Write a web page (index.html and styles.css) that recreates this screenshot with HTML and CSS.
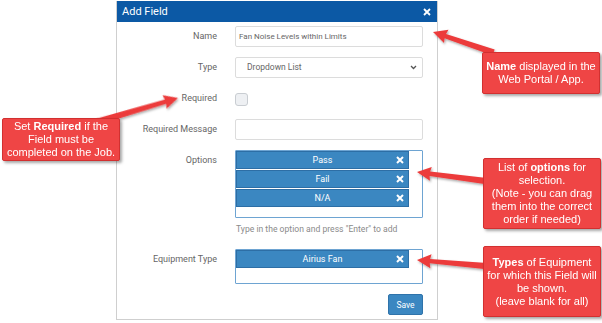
FILE: index.html
```html
<!DOCTYPE html>
<html lang="en">

<head>
    <meta charset="UTF-8" />
    <meta name="viewport" content="width=device-width, initial-scale=1.0" />
    <title>Add Field</title>
    <link rel="stylesheet" href="styles.css">
</head>

<body>
    <div class="page">
        <div class="dialog">
            <div class="dialog-header">
                <span>Add Field</span>
                <svg class="close" width="8" height="8" viewBox="0 0 8 8">
                    <path d="M1 1L7 7M7 1L1 7" stroke="#fff" stroke-width="1.8" />
                </svg>
            </div>
            <div class="dialog-body">
                <div class="row">
                    <div class="label">Name</div>
                    <div class="control">
                        <div class="input">Fan Noise Levels within Limits</div>
                    </div>
                </div>
                <div class="row">
                    <div class="label">Type</div>
                    <div class="control">
                        <div class="input select">
                            <span>Dropdown List</span>
                            <svg width="7" height="5" viewBox="0 0 7 5">
                                <path d="M1 1L3.5 3.5L6 1" fill="none" stroke="#555" stroke-width="1.3" />
                            </svg>
                        </div>
                    </div>
                </div>
                <div class="row">
                    <div class="label">Required</div>
                    <div class="control">
                        <div class="checkbox"></div>
                    </div>
                </div>
                <div class="row">
                    <div class="label">Required Message</div>
                    <div class="control">
                        <div class="input"></div>
                    </div>
                </div>
                <div class="row">
                    <div class="label">Options</div>
                    <div class="control">
                        <div class="tag-box options">
                            <div class="tag">Pass<svg class="tag-x" width="8" height="8" viewBox="0 0 8 8"><path d="M1 1L7 7M7 1L1 7" stroke="#fff" stroke-width="2" /></svg></div>
                            <div class="tag">Fail<svg class="tag-x" width="8" height="8" viewBox="0 0 8 8"><path d="M1 1L7 7M7 1L1 7" stroke="#fff" stroke-width="2" /></svg></div>
                            <div class="tag">N/A<svg class="tag-x" width="8" height="8" viewBox="0 0 8 8"><path d="M1 1L7 7M7 1L1 7" stroke="#fff" stroke-width="2" /></svg></div>
                        </div>
                        <div class="hint">Type in the option and press "Enter" to add</div>
                    </div>
                </div>
                <div class="row">
                    <div class="label">Equipment Type</div>
                    <div class="control">
                        <div class="tag-box equipment">
                            <div class="tag">Airius Fan<svg class="tag-x" width="8" height="8" viewBox="0 0 8 8"><path d="M1 1L7 7M7 1L1 7" stroke="#fff" stroke-width="2" /></svg></div>
                        </div>
                    </div>
                </div>
                <div class="row">
                    <div class="label"></div>
                    <div class="control actions">
                        <button class="save-btn">Save</button>
                    </div>
                </div>
            </div>
        </div>

        <!-- annotation arrows -->
        <svg class="arrows" width="602" height="323" viewBox="0 0 602 323">
            <defs>
                <filter id="shadow" x="-20%" y="-50%" width="140%" height="200%">
                    <feDropShadow dx="1" dy="1.5" stdDeviation="1" flood-color="#000" flood-opacity="0.35" />
                </filter>
            </defs>
            <g fill="#ec3b3b" filter="url(#shadow)">
                <polygon transform="translate(433 32) rotate(18.7)" points="0,0 14,-7 13,-2.2 64,-3.2 64,3.2 13,2.2 14,7" />
                <polygon transform="translate(178 98) rotate(163.6)" points="0,0 14,-7 13,-2.2 84,-3.2 84,3.2 13,2.2 14,7" />
                <polygon transform="translate(417 172) rotate(7.5)" points="0,0 14,-7 13,-2.2 70,-3.2 70,3.2 13,2.2 14,7" />
                <polygon transform="translate(417 260) rotate(5)" points="0,0 14,-7 13,-2.2 70,-3.2 70,3.2 13,2.2 14,7" />
            </g>
        </svg>

        <div class="callout callout-name"><span><b>Name</b> displayed in the<br>Web Portal / App.</span></div>
        <div class="callout callout-required"><span>Set <b>Required</b> if the<br>Field must be<br>completed on the Job.</span></div>
        <div class="callout callout-options"><span>List of <b>options</b> for<br>selection.<br>(Note - you can drag<br>them into the correct<br>order if needed)</span></div>
        <div class="callout callout-types"><span><b>Types</b> of Equipment<br>for which this Field will<br>be shown.<br>(leave blank for all)</span></div>
    </div>
</body>

</html>
```

FILE: styles.css
```css
/* page */

body {
    margin: 0;
    background-color: #fff;
    font-family: Roboto, "Liberation Sans", sans-serif;
}

.page {
    position: relative;
    width: 602px;
    height: 323px;
    overflow: hidden;
    padding: 1px 0 0 116px;
    box-sizing: border-box;
}

/* dialog */

.dialog {
    width: 322px;
    box-sizing: border-box;
    border: 1px solid #cfcfcf;
    border-top: none;
    background-color: #fff;
}

.dialog-header {
    height: 21px;
    background-color: #0c59a5;
    color: #fff;
    font-size: 11px;
    display: flex;
    align-items: center;
    justify-content: space-between;
    padding: 0 6px 0 5px;
}

.dialog-body {
    display: flex;
    flex-direction: column;
    gap: 10px;
    padding: 4px 14px 4px 0;
}

.row {
    display: flex;
    gap: 18px;
}

.label {
    width: 100px;
    flex-shrink: 0;
    text-align: right;
    font-size: 9px;
    line-height: 21px;
    color: #666;
}

.control {
    width: 188px;
}

.input {
    height: 21px;
    box-sizing: border-box;
    border: 1px solid #dcdcdc;
    border-radius: 2px;
    padding-left: 3px;
    font-size: 8px;
    line-height: 19px;
    color: #666;
}

.select {
    display: flex;
    align-items: center;
    justify-content: space-between;
    padding: 0 5px 0 11px;
    font-size: 8.5px;
}

.checkbox {
    width: 13px;
    height: 13px;
    box-sizing: border-box;
    margin-top: 5px;
    border: 1px solid #c9cdd2;
    border-radius: 3px;
    background-color: #eef0f3;
}

.tag-box {
    box-sizing: border-box;
    border: 1px solid #6ea4d2;
    border-radius: 1px;
    display: flex;
    flex-direction: column;
    gap: 1px;
}

.options {
    height: 68px;
}

.equipment {
    height: 35px;
}

.tag {
    position: relative;
    width: 173px;
    height: 18px;
    box-sizing: border-box;
    background-color: #3b87c1;
    border: 1px solid #2d6ea5;
    color: #fff;
    font-size: 9px;
    line-height: 16px;
    text-align: center;
}

.tag-x {
    position: absolute;
    right: 4px;
    top: 4px;
}

.hint {
    margin: 4px 0 3px 1px;
    font-size: 8.6px;
    line-height: 14px;
    color: #8a8a8a;
}

.actions {
    display: flex;
    justify-content: flex-end;
}

.save-btn {
    width: 35px;
    height: 21px;
    padding: 0;
    border: 1px solid #2f73aa;
    border-radius: 2px;
    background-color: #3b87c1;
    color: #fff;
    font-family: Roboto, sans-serif;
    font-size: 8.5px;
}

/* annotations */

.arrows {
    position: absolute;
    left: 0;
    top: 0;
}

.callout {
    position: absolute;
    box-sizing: border-box;
    background-color: #ef4545;
    border: 1px solid #d23030;
    border-radius: 2px;
    box-shadow: 2px 2px 3px rgba(0, 0, 0, 0.35);
    color: #fff;
    font-family: "Liberation Sans", Arial, sans-serif;
    font-size: 11px;
    line-height: 13px;
    text-align: center;
    display: flex;
    align-items: center;
    justify-content: center;
    white-space: nowrap;
}

.callout-name {
    left: 482px;
    top: 52px;
    width: 118px;
    height: 42px;
}

.callout-required {
    left: 2px;
    top: 118px;
    width: 118px;
    height: 43px;
}

.callout-options {
    left: 483px;
    top: 158px;
    width: 118px;
    height: 71px;
}

.callout-types {
    left: 483px;
    top: 246px;
    width: 118px;
    height: 71px;
}
```
